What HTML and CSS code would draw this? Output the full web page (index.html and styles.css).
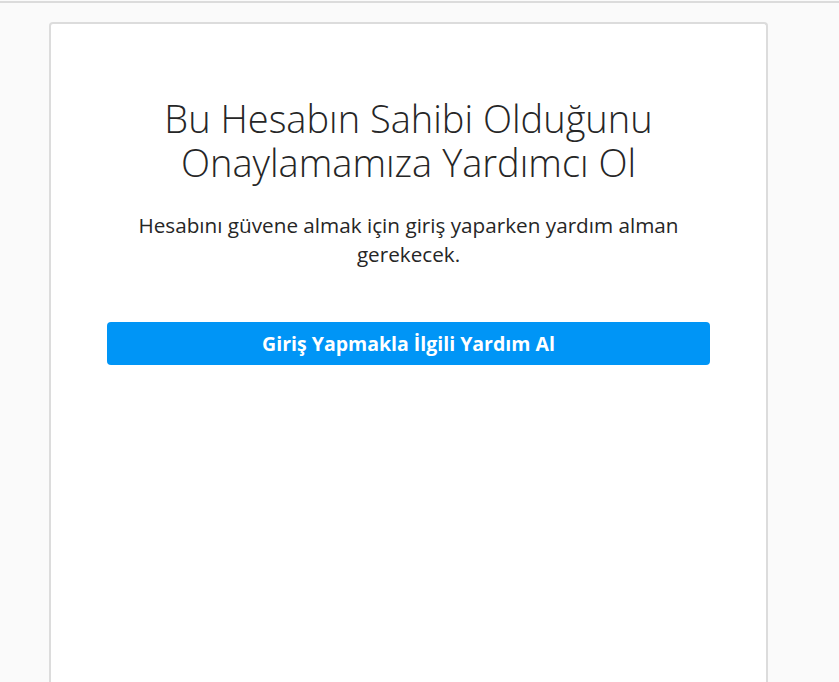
FILE: index.html
```html
<!DOCTYPE html>
<html lang="tr">
<head>
    <meta charset="UTF-8">
    <meta name="viewport" content="width=device-width, initial-scale=1.0">
    <title>Hesap Onayı</title>
    <link rel="stylesheet" href="styles.css">
</head>
<body>
    <div class="top-line"></div>

    <div class="page">
        <div class="card">
            <h1 class="title">Bu Hesabın Sahibi Olduğunu Onaylamamıza Yardımcı Ol</h1>
            <p class="subtitle">Hesabını güvene almak için giriş yaparken yardım alman gerekecek.</p>
            <button class="button">Giriş Yapmakla İlgili Yardım Al</button>
        </div>
    </div>
</body>
</html>
```

FILE: styles.css
```css
body {
    margin: 0;
    background-color: #fafafa;
    font-family: "Open Sans", "Liberation Sans", sans-serif;
    color: #262626;
    overflow: hidden;
}
.top-line {
    height: 2px;
    margin-top: 1px;
    background-color: #dbdbdb;
}
.page {
    padding-top: 19px;
    padding-left: 49px;
}
.card {
    width: 603px;
    height: 658px;
    padding: 0 56px;
    background-color: #fff;
    border: 2px solid #dcdcdc;
    border-bottom: none;
    border-radius: 4px 4px 0 0;
    text-align: center;
}
.title {
    margin: 72px 0 0;
    font-size: 38px;
    font-weight: 300;
    line-height: 44px;
    color: #262626;
}
.subtitle {
    margin: 27px 5px 0;
    font-size: 20.7px;
    line-height: 29px;
}
.button {
    display: block;
    width: 100%;
    height: 43px;
    margin-top: 53px;
    background-color: #0095f6;
    color: #fff;
    border: none;
    border-radius: 4px;
    font-family: inherit;
    font-size: 19.5px;
    font-weight: 700;
    cursor: pointer;
}
```
